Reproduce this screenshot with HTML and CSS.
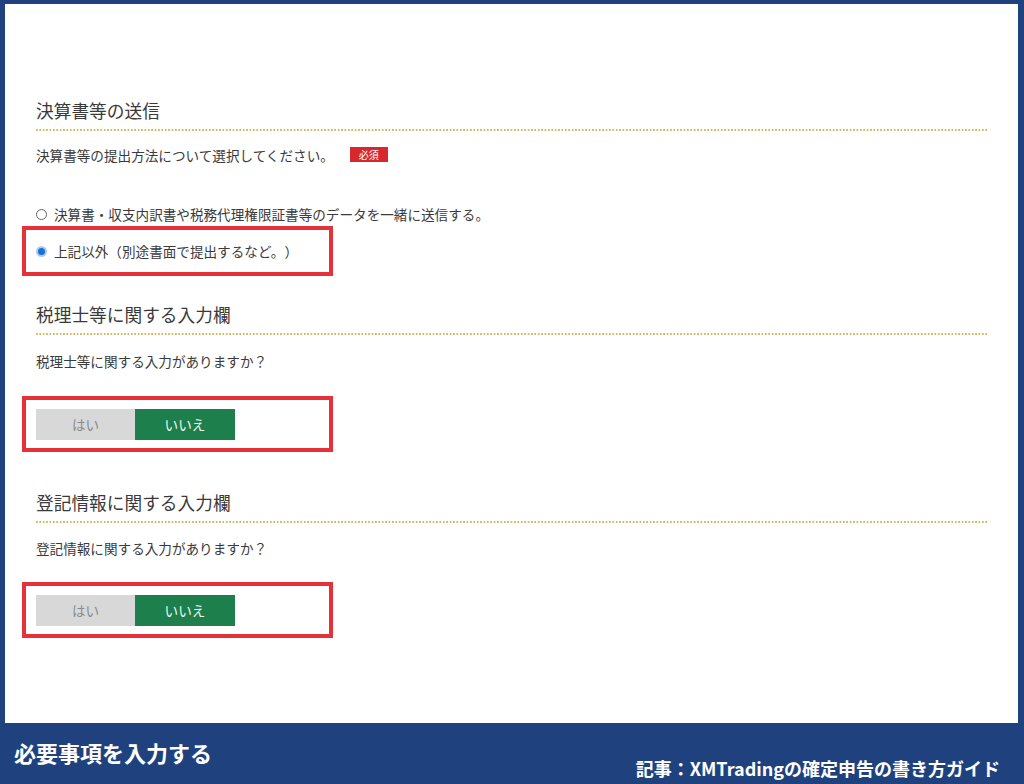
FILE: index.html
```html
<!DOCTYPE html>
<html lang="ja">
<head>
<meta charset="utf-8">
<title>必要事項を入力する</title>
<link rel="stylesheet" href="styles.css">
</head>
<body>
<div class="frame">
  <main class="panel">
    <section class="sec sec1">
      <h2 class="sec-title">決算書等の送信</h2>
      <p class="q q1">決算書等の提出方法について選択してください。<span class="badge">必須</span></p>
      <div class="radio-row row-first"><span class="radio"></span>決算書・収支内訳書や税務代理権限証書等のデータを一緒に送信する。</div>
      <div class="mark mark-radio">
        <div class="radio-row"><span class="radio checked"></span>上記以外（別途書面で提出するなど。）</div>
      </div>
    </section>
    <section class="sec sec2">
      <h2 class="sec-title">税理士等に関する入力欄</h2>
      <p class="q">税理士等に関する入力がありますか？</p>
      <div class="mark mark-btn">
        <div class="toggle"><span class="opt">はい</span><span class="opt on">いいえ</span></div>
      </div>
    </section>
    <section class="sec sec3">
      <h2 class="sec-title">登記情報に関する入力欄</h2>
      <p class="q">登記情報に関する入力がありますか？</p>
      <div class="mark mark-btn">
        <div class="toggle"><span class="opt">はい</span><span class="opt on">いいえ</span></div>
      </div>
    </section>
  </main>
  <footer class="banner">
    <div class="banner-title">必要事項を入力する</div>
    <div class="banner-sub">記事：XMTradingの確定申告の書き方ガイド</div>
  </footer>
</div>
</body>
</html>
```
FILE: styles.css
```css
* { box-sizing: border-box; }
html, body {
  margin: 0;
  padding: 0;
  background: #1f427e;
}
body {
  width: 1024px;
  height: 784px;
  overflow: hidden;
  font-family: "Noto Sans CJK JP", "Noto Sans", sans-serif;
  color: #333;
  text-spacing-trim: space-all;
}
.frame {
  padding: 4px 6px 0 5px;
}
.panel {
  display: block;
  background: #fff;
  height: 719px;
  padding: 94px 30px 0 31px;
}
.sec-title {
  margin: 0;
  font-size: 17.7px;
  font-weight: 400;
  line-height: 24px;
  padding-bottom: 9px;
  color: #3a3a3a;
  background-image: linear-gradient(to right, #d2b860 50%, transparent 50%);
  background-size: 3.4px 2px;
  background-repeat: repeat-x;
  background-position: 0 100%;
}
.q {
  margin: 14px 0 0;
  font-size: 13.6px;
  line-height: 20px;
  color: #3a3a3a;
}
.badge {
  display: inline-block;
  vertical-align: top;
  margin: 2px 0 0 16px;
  width: 38px;
  height: 15px;
  line-height: 15px;
  background: #d7282e;
  color: #fff;
  font-size: 10px;
  text-align: center;
}
.radio-row {
  display: flex;
  align-items: center;
  font-size: 13.6px;
  line-height: 20px;
  color: #3a3a3a;
}
.row-first {
  margin-top: 39px;
}
.radio {
  width: 11px;
  height: 11px;
  border: 1px solid #666;
  border-radius: 50%;
  margin-right: 7px;
  flex: none;
}
.radio.checked {
  border: 2px solid #a9cdf0;
  background: #1c6fd6;
}
.mark {
  width: 311px;
  margin-left: -14px;
  border: 4px solid #e5323a;
  padding-left: 10px;
}
.mark-radio {
  margin-top: 2px;
  padding-top: 11px;
  padding-bottom: 11px;
}
.sec2 { margin-top: 26px; }
.sec3 { margin-top: 38px; }
.sec2 .q { margin-top: 16px; }
.sec3 .q { margin-top: 15px; }
.mark-btn {
  margin-top: 25px;
  padding-top: 9px;
  padding-bottom: 8px;
}
.sec3 .mark-btn { margin-top: 24px; }
.toggle {
  display: flex;
}
.opt {
  width: 99px;
  height: 31px;
  line-height: 31px;
  text-align: center;
  font-size: 13.6px;
  background: #d8d8d8;
  color: #8a8a8a;
}
.opt.on {
  width: 100px;
  background: #1d7f4b;
  color: #f2f7f3;
}
.banner {
  height: 61px;
  display: flex;
  justify-content: space-between;
  align-items: flex-start;
  padding: 0 18px 0 9px;
  color: #fff;
  font-weight: 700;
}
.banner-title {
  font-size: 22px;
  line-height: 30px;
  margin-top: 14px;
}
.banner-sub {
  align-self: flex-end;
  font-size: 18px;
  line-height: 24px;
  margin-bottom: 4px;
}
```
